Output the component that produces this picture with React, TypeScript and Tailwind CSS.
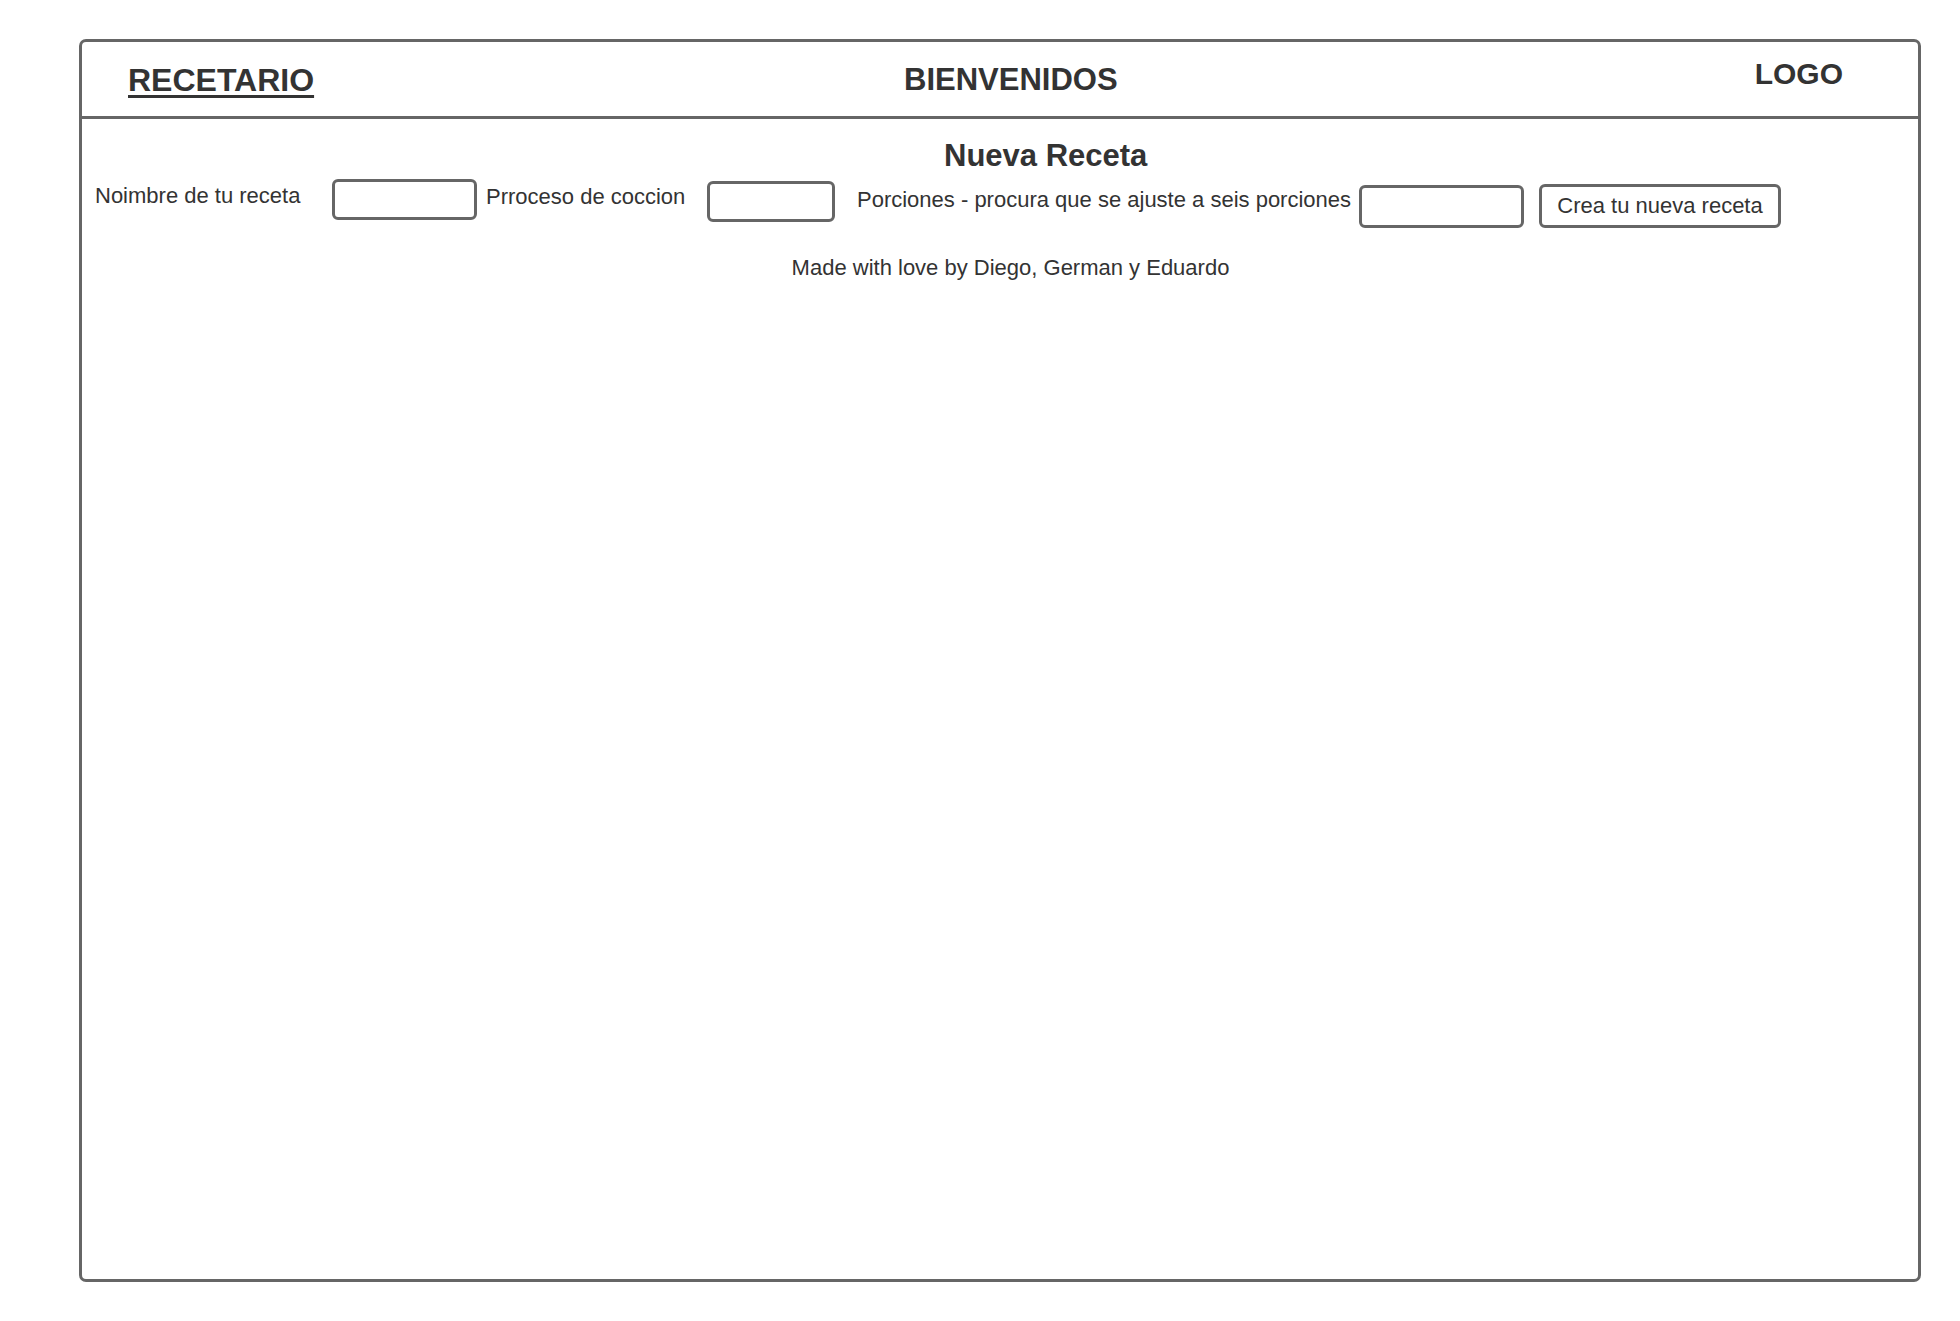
export default function App() {
  const font = { fontFamily: '"Liberation Sans", Arial, sans-serif' };
  return (
    <div className="min-h-[1321px] w-[1960px] bg-white text-[#333333]" style={font}>
      <div className="pt-[39px] pl-[79px]">
        {/* Frame */}
        <div className="w-[1842px] h-[1243px] border-[3px] border-[#666666] rounded-[7px] flex flex-col">
          {/* Header */}
          <div className="h-[77px] border-b-[3px] border-[#666666] flex items-start shrink-0">
            <div className="w-[822px] pl-[46px] mt-[22px]">
              <span className="text-[32px] leading-[32px] font-bold underline underline-offset-[4px] decoration-[3px]">
                RECETARIO
              </span>
            </div>
            <div className="mt-[22px] text-[31px] leading-[31px] font-bold">BIENVENIDOS</div>
            <div className="ml-auto mr-[75px] mt-[17px] text-[30px] leading-[30px] font-bold">LOGO</div>
          </div>

          {/* Body */}
          <div className="flex flex-col">
            <div className="mt-[21px] ml-[862px] text-[31px] leading-[31px] font-bold">Nueva Receta</div>

            <div className="mt-[8px] flex items-start text-[22px] leading-[22px]">
              <label className="w-[250px] pl-[13px] mt-[6px] whitespace-nowrap">Noimbre de tu receta</label>
              <input className="w-[145px] h-[41px] border-[3px] border-[#666666] rounded-[6px] outline-none" />
              <label className="ml-[9px] w-[221px] mt-[7px] whitespace-nowrap">Prroceso de coccion</label>
              <input className="mt-[2px] w-[128px] h-[41px] border-[3px] border-[#666666] rounded-[6px] outline-none" />
              <label className="ml-[22px] w-[502px] mt-[10px] whitespace-nowrap">
                Porciones - procura que se ajuste a seis porciones
              </label>
              <input className="mt-[6px] w-[165px] h-[43px] border-[3px] border-[#666666] rounded-[6px] outline-none" />
              <button className="ml-[15px] mt-[5px] w-[242px] h-[44px] border-[3px] border-[#666666] rounded-[6px] bg-white text-[22px] text-[#333333] flex items-center justify-center">
                Crea tu nueva receta
              </button>
            </div>

            <div className="mt-[29px] flex justify-center pl-[21px] text-[22px] leading-[22px]">
              Made with love by Diego, German y Eduardo
            </div>
          </div>
        </div>
      </div>
    </div>
  );
}
